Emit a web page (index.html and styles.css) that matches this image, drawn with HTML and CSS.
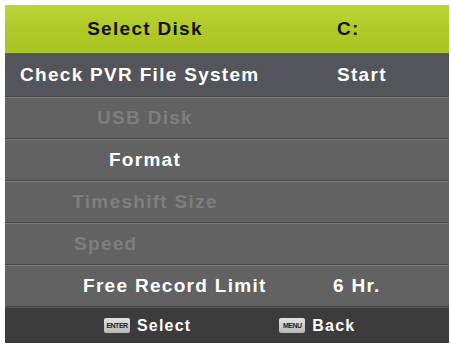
FILE: index.html
```html
<!DOCTYPE html>
<html lang="en">
<head>
  <meta charset="UTF-8">
  <title>PVR File System</title>
  <link rel="stylesheet" href="styles.css">
</head>
<body>
  <div class="menu">
    <div class="fila activa">
      <span class="nombre">Select Disk</span>
      <span class="valor">C:</span>
    </div>
    <div class="fila oscura">
      <span class="nombre check">Check PVR File System</span>
      <span class="valor">Start</span>
    </div>
    <div class="fila">
      <span class="nombre apagado">USB Disk</span>
    </div>
    <div class="fila">
      <span class="nombre">Format</span>
    </div>
    <div class="fila">
      <span class="nombre apagado">Timeshift Size</span>
    </div>
    <div class="fila">
      <span class="nombre apagado speed">Speed</span>
    </div>
    <div class="fila">
      <span class="nombre libre">Free Record Limit</span>
      <span class="valor hr">6 Hr.</span>
    </div>
    <div class="pie">
      <div class="ayuda enter"><span class="tecla">ENTER</span>Select</div>
      <div class="ayuda back"><span class="tecla">MENU</span>Back</div>
    </div>
  </div>
</body>
</html>
```
FILE: styles.css
```css
body {
  margin: 0;
  background-color: #fff;
  font-family: 'Liberation Sans', Arial, sans-serif;
}
.menu {
  margin: 5px 2px 4px 5px;
  background-color: #626262;
}
.fila {
  display: grid;
  grid-template-columns: 280px 1fr;
  align-items: center;
  height: 40px;
  border-top: 1px solid #7a7a7a;
  border-bottom: 1px solid #474747;
  color: #fff;
  font-size: 19px;
  font-weight: bold;
  letter-spacing: 1.3px;
  white-space: nowrap;
}
.fila.activa {
  height: 48px;
  border: none;
  background: linear-gradient(#bcd43a, #b1cc28 40%, #aac523);
  color: #111;
}
.fila.oscura {
  height: 42px;
  border-top: 1px solid #5a5c62;
  background-color: #54555a;
}
.nombre {
  text-align: center;
}
.nombre.check {
  padding-left: 15px;
  text-align: left;
}
.nombre.speed {
  padding-left: 69px;
  text-align: left;
}
.nombre.libre {
  padding-left: 78px;
  text-align: left;
}
.nombre.apagado {
  color: #7e7e7e;
}
.valor {
  padding-left: 52px;
}
.valor.hr {
  padding-left: 48px;
}
.pie {
  display: flex;
  align-items: center;
  height: 35px;
  border-top: 1px solid #555;
  background-color: #3c3c3c;
  color: #fff;
  font-size: 16px;
  font-weight: bold;
  letter-spacing: 1.2px;
}
.ayuda {
  display: flex;
  align-items: center;
}
.ayuda.enter {
  margin-left: 99px;
}
.ayuda.back {
  margin-left: 88px;
}
.tecla {
  display: inline-block;
  width: 26px;
  height: 15px;
  margin-right: 7px;
  border-radius: 2px;
  background: linear-gradient(#e2e2e2, #b8b8b8);
  color: #222;
  font-size: 7px;
  line-height: 15px;
  letter-spacing: -0.5px;
  text-align: center;
}
```
